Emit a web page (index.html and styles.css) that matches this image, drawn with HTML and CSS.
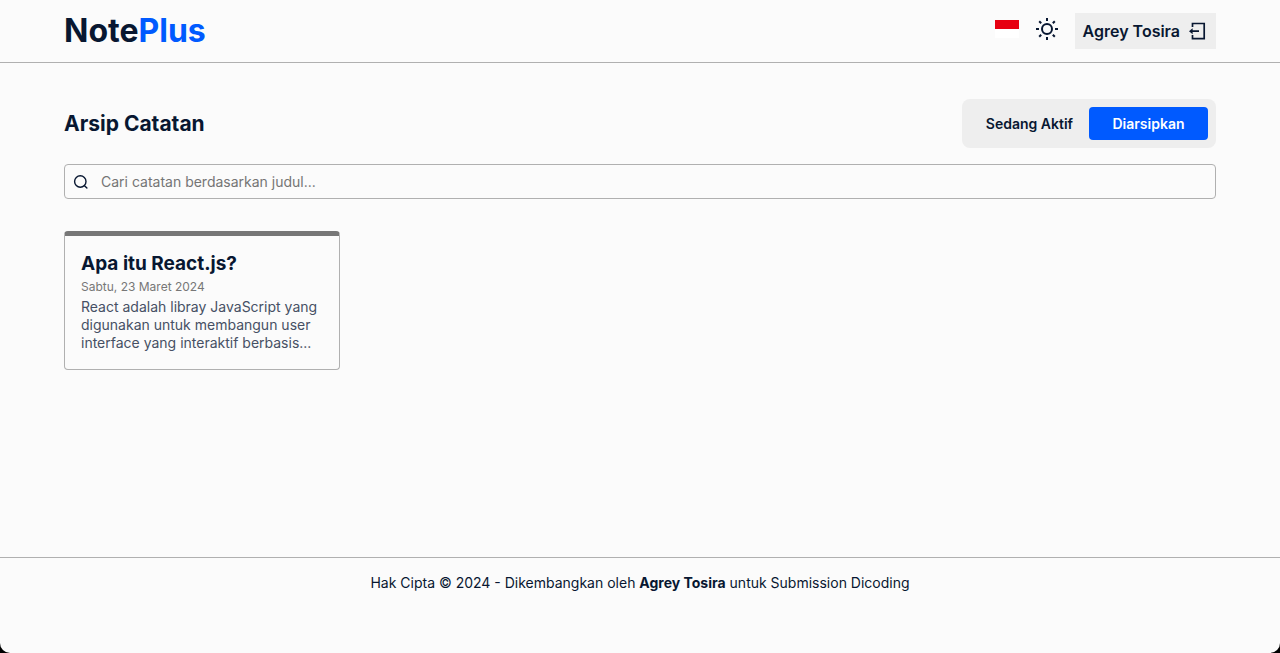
FILE: index.html
```html
<!DOCTYPE html>
<html lang="id">
<head>
    <meta charset="UTF-8">
    <meta name="viewport" content="width=device-width, initial-scale=1.0">
    <title>NotePlus</title>
    <link rel="stylesheet" href="styles.css">
</head>
<body>
    <div class="app">
        <header class="header">
            <h1 class="logo"><a href="#">Note<span>Plus</span></a></h1>
            <div class="header-actions">
                <button class="icon-button" type="button" aria-label="Ganti bahasa">
                    <svg width="24" height="18" viewBox="0 0 24 18">
                        <path fill="#fff" d="M0 0h24v18H0z"/>
                        <path fill="#e70011" d="M0 0h24v9H0z"/>
                    </svg>
                </button>
                <button class="icon-button" type="button" aria-label="Ganti tema">
                    <svg width="24" height="24" viewBox="0 0 24 24" fill="none" stroke="currentColor" stroke-width="2">
                        <circle cx="12" cy="12" r="5"/>
                        <path d="M12 1v3M12 20v3M1 12h3M20 12h3M4.2 4.2l2 2M17.8 17.8l2 2M4.2 19.8l2-2M17.8 6.2l2-2"/>
                    </svg>
                </button>
                <button class="logout-button" type="button">
                    Agrey Tosira
                    <svg width="20" height="20" viewBox="0 0 20 20" fill="none" stroke="currentColor" stroke-width="1.7">
                        <path d="M4.5 6V2.5h11.7v15.2H4.5V14M3 10.2h8"/>
                        <path d="M4.6 7.2v6L1 10.2z" fill="currentColor" stroke="none"/>
                    </svg>
                </button>
            </div>
        </header>

        <main class="main">
            <div class="title-row">
                <h2>Arsip Catatan</h2>
                <div class="tabs">
                    <button class="tab" type="button">Sedang Aktif</button>
                    <button class="tab active" type="button">Diarsipkan</button>
                </div>
            </div>

            <label class="search">
                <svg width="16" height="16" viewBox="0 0 16 16" fill="none" stroke="currentColor" stroke-width="1.4" stroke-linecap="round">
                    <circle cx="7.3" cy="7.5" r="5.7"/>
                    <path d="M11.5 11.7l2.4 2.4"/>
                </svg>
                <input type="text" placeholder="Cari catatan berdasarkan judul..." aria-label="Cari catatan">
            </label>

            <div class="note-list">
                <article class="note">
                    <h3>Apa itu React.js?</h3>
                    <p class="note-date">Sabtu, 23 Maret 2024</p>
                    <p class="note-body">React adalah libray JavaScript yang digunakan untuk membangun user interface yang interaktif berbasis...</p>
                </article>
            </div>
        </main>

        <footer class="footer">
            <p>Hak Cipta © 2024 - Dikembangkan oleh <strong>Agrey Tosira</strong> untuk Submission Dicoding</p>
        </footer>
    </div>
</body>
</html>
```
FILE: styles.css
```css
* {
    box-sizing: border-box;
    margin: 0;
    padding: 0;
}

body {
    background-color: #000;
    color: #081731;
    font-family: Inter, sans-serif;
    font-size: 14px;
}

button,
input {
    border: none;
    background: none;
    color: inherit;
    font: inherit;
}

button {
    cursor: pointer;
}

svg {
    display: block;
}

.app {
    display: flex;
    flex-direction: column;
    min-height: 100vh;
    background-color: #fbfbfb;
    border-radius: 0 0 10px 10px;
}

.header {
    display: flex;
    justify-content: space-between;
    align-items: center;
    height: 63px;
    padding: 0 64px;
    border-bottom: 1px solid #b0b0b0;
}

.logo {
    font-size: 32px;
    line-height: 40px;
}

.logo a {
    color: inherit;
    text-decoration: none;
}

.logo span {
    color: #005aff;
}

.header-actions {
    display: flex;
    align-items: center;
    gap: 16px;
}

.icon-button {
    padding-bottom: 4px;
}

.logout-button {
    display: flex;
    align-items: center;
    gap: 8px;
    height: 36px;
    padding: 0 8px;
    background-color: #eee;
    font-size: 16px;
    font-weight: 600;
}

.main {
    flex: 1;
    padding: 36px 64px;
}

.title-row {
    display: flex;
    justify-content: space-between;
    align-items: center;
    margin-bottom: 16px;
}

.title-row h2 {
    font-size: 21px;
}

.tabs {
    display: flex;
    padding: 8px;
    border-radius: 8px;
    background-color: #eee;
}

.tab {
    min-width: 119px;
    padding: 8px 16px;
    border-radius: 4px;
    font-weight: 600;
    line-height: 17px;
}

.tab.active {
    background-color: #005aff;
    color: #fff;
}

.search {
    display: flex;
    align-items: center;
    gap: 12px;
    height: 35px;
    padding: 0 8px;
    border: 1px solid #b0b0b0;
    border-radius: 4px;
}

.search input {
    flex: 1;
    outline: none;
}

.search input::placeholder {
    color: #757575;
}

.note-list {
    display: grid;
    grid-template-columns: repeat(auto-fill, minmax(240px, 1fr));
    gap: 16px;
    margin-top: 32px;
}

.note {
    padding: 16px 16px 17px;
    border: 1px solid #b0b0b0;
    border-top: 5px solid #777;
    border-radius: 4px;
}

.note h3 {
    margin-bottom: 4px;
    font-size: 19px;
    line-height: 23px;
}

.note-date {
    margin-bottom: 4px;
    color: #777;
    font-size: 12px;
    line-height: 15px;
}

.note-body {
    color: #465064;
    line-height: 18px;
}

.footer {
    min-height: 96px;
    padding: 16px 64px;
    border-top: 1px solid #b0b0b0;
    line-height: 18px;
    text-align: center;
}
```
